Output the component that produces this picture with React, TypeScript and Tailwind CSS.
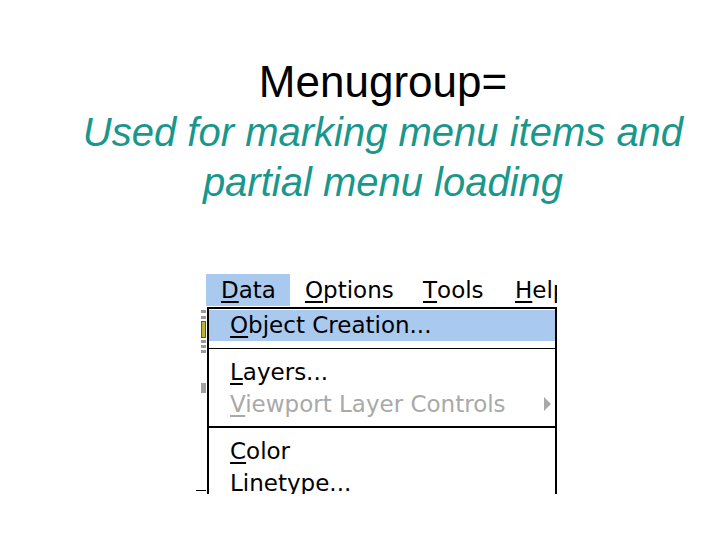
import type { ReactNode } from "react";

const menuFont = { fontFamily: '"DejaVu Sans", Verdana, sans-serif' };

function Key({ children }: { children: ReactNode }) {
  return <span className="underline decoration-[2px] underline-offset-[3px]">{children}</span>;
}

function Item({ children, active, disabled, arrow }: { children: ReactNode; active?: boolean; disabled?: boolean; arrow?: boolean }) {
  return (
    <div
      className={
        "flex items-center pl-[21px] pr-[3px] text-[23px] leading-none " +
        (active ? "bg-[#a9c9ee] h-[31px] " : "h-[32px] ") +
        (disabled ? "text-[#a9a9a9]" : "text-black")
      }
    >
      <span className="flex-1 whitespace-nowrap">{children}</span>
      {arrow && (
        <svg width="8" height="14" viewBox="0 0 8 14">
          <path d="M0 0 L7 7 L0 14 Z" fill="#a9a9a9" />
        </svg>
      )}
    </div>
  );
}

export default function App() {
  return (
    <div className="w-[720px] h-[540px] bg-white overflow-hidden">
      <div className="pt-[57px] pl-[46px] text-center" style={{ fontFamily: '"Liberation Sans", Arial, sans-serif' }}>
        <div className="text-[44px] leading-[50px] text-black">Menugroup=</div>
        <div className="text-[40px] leading-[50px] italic text-[#1a978d]">
          Used for marking menu items and
          <br />
          partial menu loading
        </div>
      </div>

      <div className="ml-[196px] mt-[66px] w-[361px] h-[221px] overflow-hidden flex" style={menuFont}>
        {/* scraps of the window behind the menu */}
        <div className="w-[10px] shrink-0 flex flex-col items-end">
          <div className="mt-[37px] w-[5px] h-[3px] bg-[#9a9a9a]" />
          <div className="mt-[3px] w-[5px] h-[3px] bg-[#9a9a9a]" />
          <div className="mt-[2px] w-[5px] h-[17px] bg-[#b8b23c] border border-[#555]" />
          <div className="mt-[2px] w-[5px] h-[3px] bg-[#9a9a9a]" />
          <div className="mt-[2px] w-[5px] h-[3px] bg-[#9a9a9a]" />
          <div className="mt-[2px] w-[5px] h-[3px] bg-[#9a9a9a]" />
          <div className="mt-[30px] w-[5px] h-[10px] bg-[#a0a0a0]" />
          <div className="mt-[97px] w-[10px] h-[1px] bg-black" />
        </div>

        <div className="w-[351px] shrink-0">
          <div className="flex pt-[1px] h-[34px] text-[23px] leading-none text-black whitespace-nowrap">
            <div className="w-[84px] shrink-0 h-[32px] pl-[15px] flex items-center bg-[#a9c9ee]">
              <Key>D</Key>ata
            </div>
            <div className="w-[118px] shrink-0 h-[32px] pl-[15px] flex items-center">
              <Key>O</Key>ptions
            </div>
            <div className="w-[92px] shrink-0 h-[32px] pl-[15px] flex items-center">
              <Key>T</Key>ools
            </div>
            <div className="shrink-0 h-[32px] pl-[15px] flex items-center">
              <Key>H</Key>elp
            </div>
          </div>

          <div className="ml-[1px] w-[350px] h-[200px] border-t-2 border-l-2 border-r-2 border-black bg-white pt-[1px]">
            <Item active>
              <Key>O</Key>bject Creation...
            </Item>
            <div className="h-[7px]" />
            <div className="h-[1px] bg-black" />
            <div className="h-[7px]" />
            <Item>
              <Key>L</Key>ayers...
            </Item>
            <Item disabled arrow>
              <Key>V</Key>iewport Layer Controls
            </Item>
            <div className="h-[6px]" />
            <div className="h-[2px] bg-black" />
            <div className="h-[7px]" />
            <Item>
              <Key>C</Key>olor
            </Item>
            <Item>
              Li<Key>n</Key>etype...
            </Item>
          </div>
        </div>
      </div>
    </div>
  );
}
